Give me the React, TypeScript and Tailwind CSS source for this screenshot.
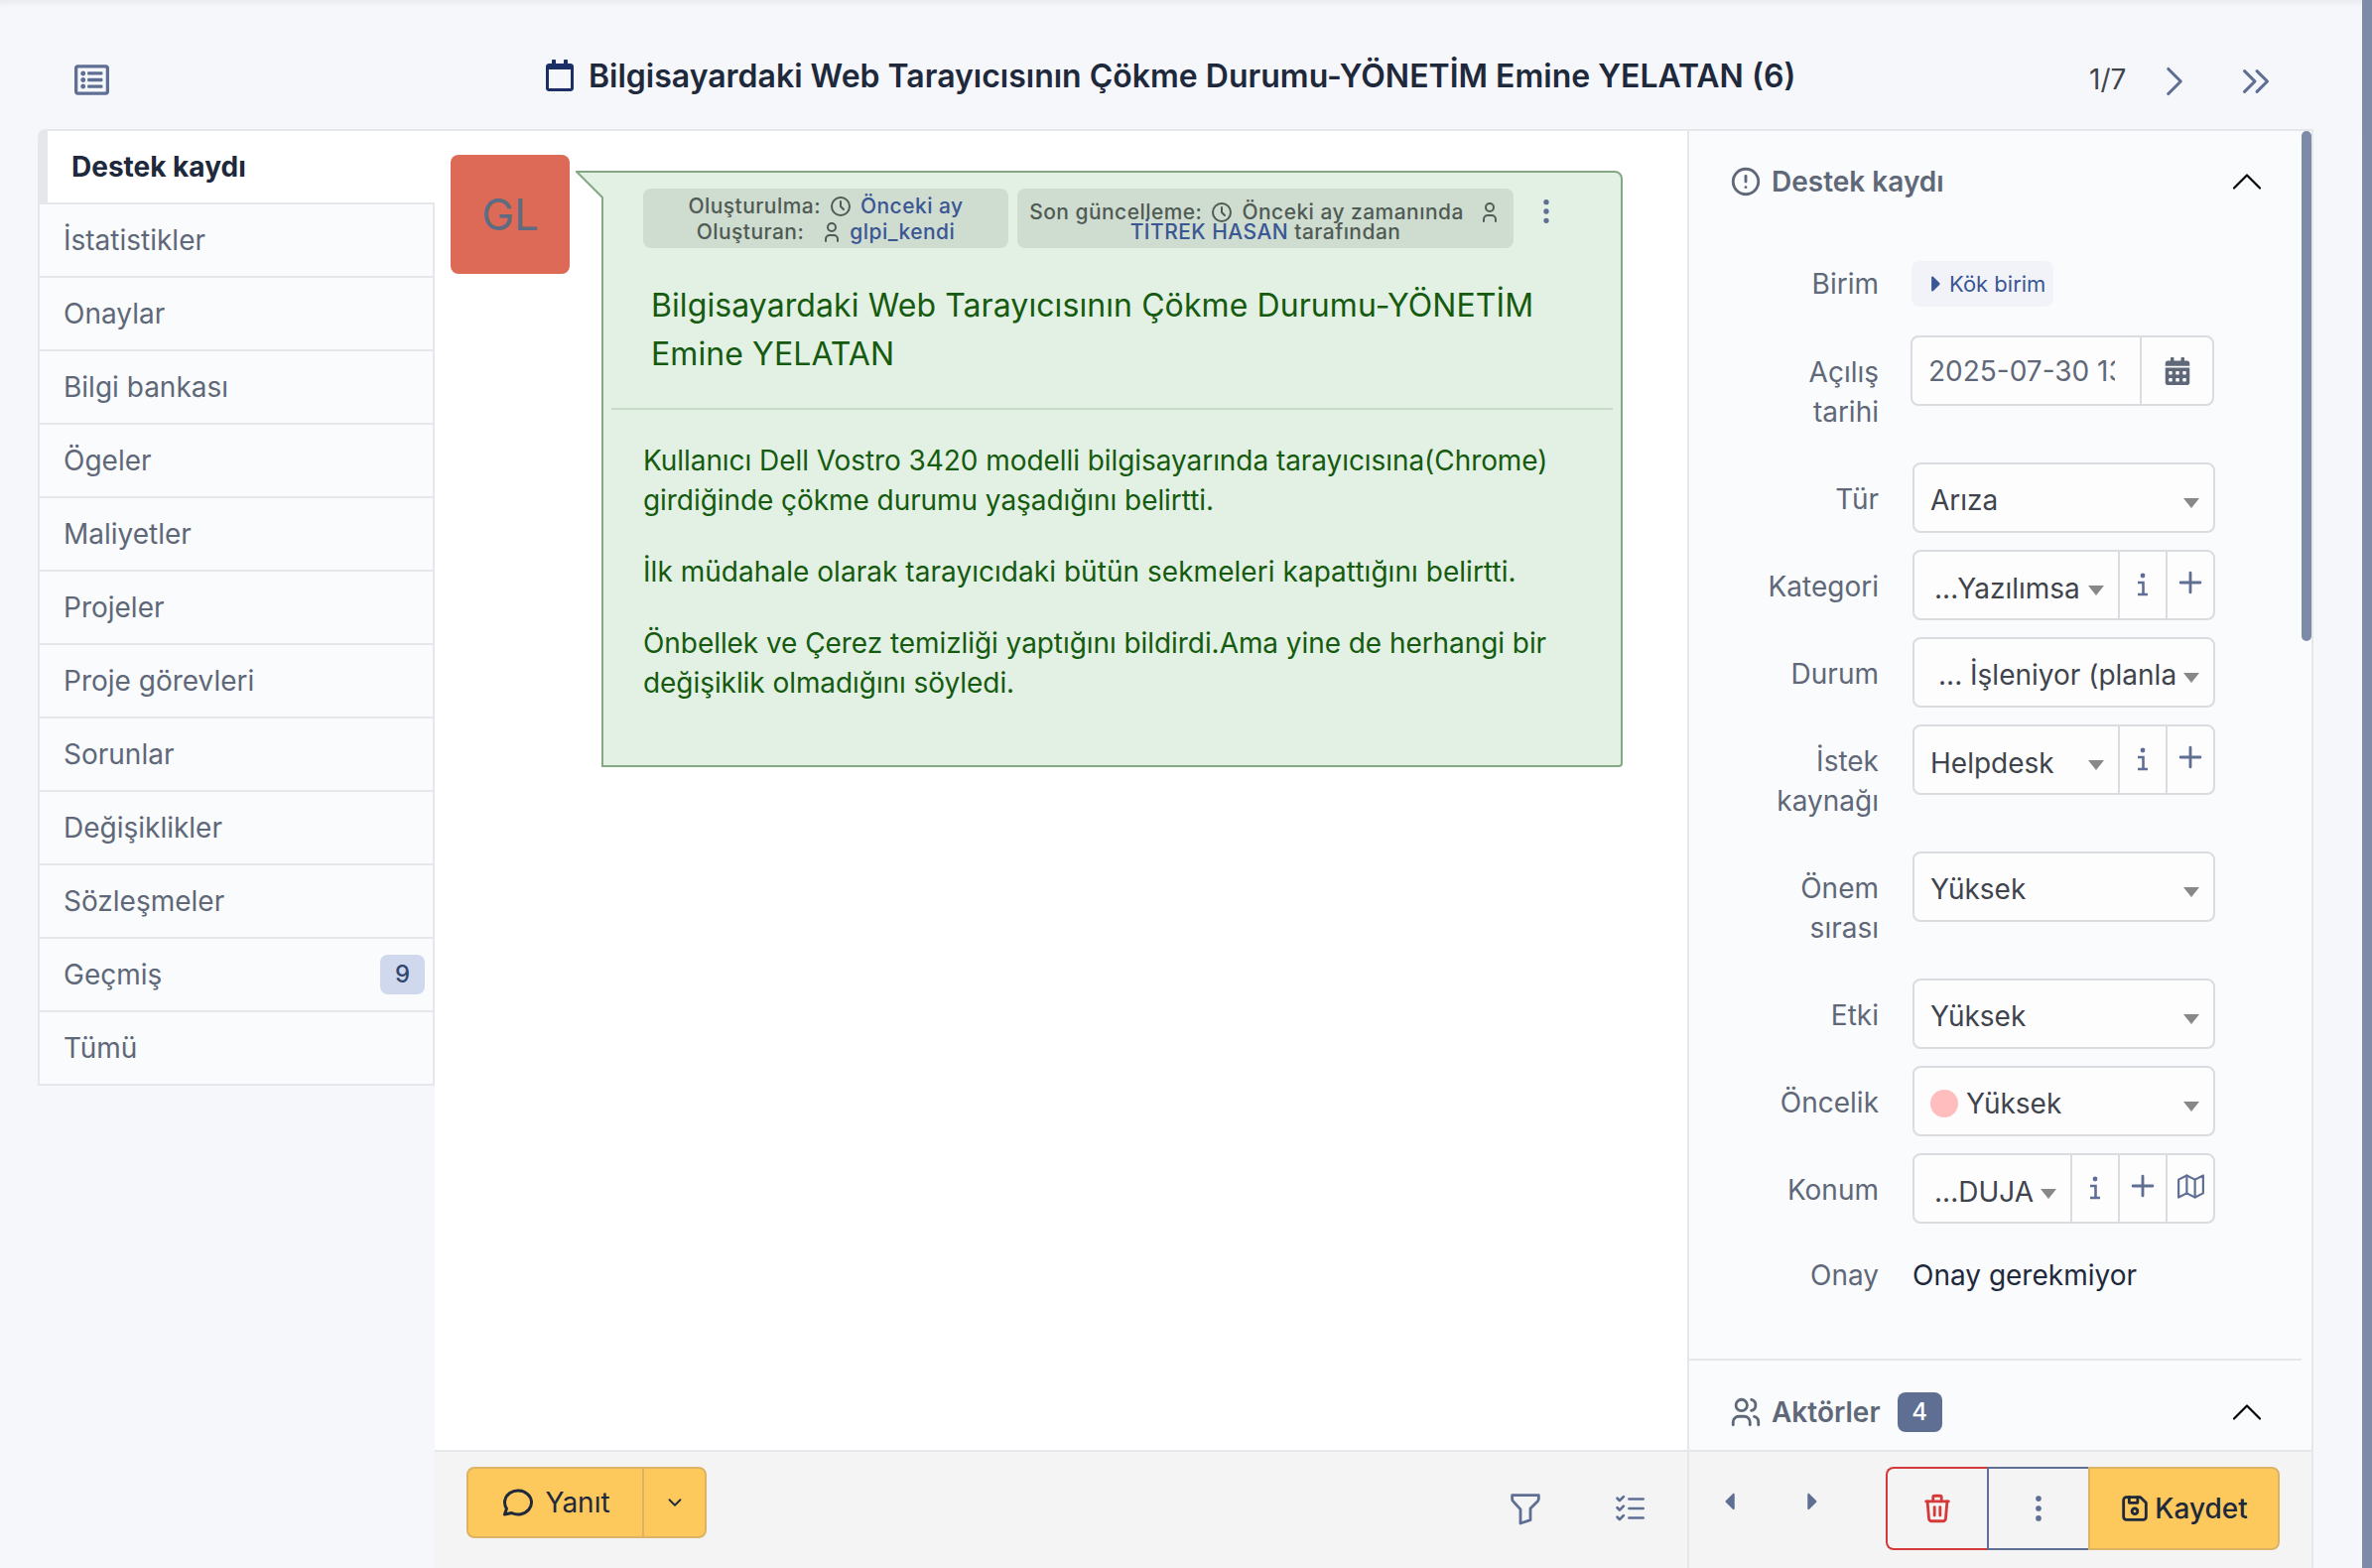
import { FaCalendarAlt, FaCaretLeft, FaCaretRight, FaRegCalendar, FaRegListAlt } from "react-icons/fa";
import {
  TbAlertCircle,
  TbChevronDown,
  TbChevronRight,
  TbChevronsRight,
  TbChevronUp,
  TbClock,
  TbDeviceFloppy,
  TbDotsVertical,
  TbFilter,
  TbListCheck,
  TbMap,
  TbMessageCircle,
  TbPlus,
  TbTrash,
  TbUser,
  TbUsers,
} from "react-icons/tb";

const tabs = [
  "İstatistikler",
  "Onaylar",
  "Bilgi bankası",
  "Ögeler",
  "Maliyetler",
  "Projeler",
  "Proje görevleri",
  "Sorunlar",
  "Değişiklikler",
  "Sözleşmeler",
  "Geçmiş",
  "Tümü",
];

const Caret = ({ low }: { low?: boolean }) => (
  <span
    className={`ml-auto h-0 w-0 flex-none border-x-[8px] border-t-[10px] border-x-transparent border-t-[#888888] ${
      low ? "mt-[10px]" : "mt-[6px]"
    }`}
  />
);

const InfoIcon = () => (
  <svg className="mt-[4px]" width="12" height="24" viewBox="0 0 12 24" fill="none" stroke="currentColor" strokeWidth="2.6">
    <circle cx="6" cy="3" r="2.4" fill="currentColor" stroke="none" />
    <path d="M1 10 H6.5 V22 M1 22 H11" />
  </svg>
);

const Addon = ({ children }: { children: React.ReactNode }) => (
  <div className="flex w-[48px] flex-none items-center justify-center border-l-2 border-[#dadce2] pb-[5px] text-[#5f6f94]">
    {children}
  </div>
);

const Field = ({
  label,
  children,
  tall,
}: {
  label: React.ReactNode;
  children: React.ReactNode;
  tall?: boolean;
}) => (
  <div className={`mb-[18px] flex ${tall ? "h-[110px]" : "h-[70px]"}`}>
    <div className="w-[191px] flex-none pt-[17px] text-right leading-[40px] text-[#5f6878]">{label}</div>
    <div className="ml-[34px] h-[71px] w-[305px] flex-none">{children}</div>
  </div>
);

const SelectBox = ({ children, pl = "pl-[16px]" }: { children: React.ReactNode; pl?: string }) => (
  <div
    className={`flex h-full items-center rounded-lg border-2 border-[#dadce2] bg-[#fdfdfe] pr-[14px] pt-[4px] text-[#3f444c] ${pl}`}
  >
    {children}
    <Caret />
  </div>
);

const Group = ({ value, pl, map }: { value: string; pl: string; map?: boolean }) => (
  <div className="flex h-full rounded-lg border-2 border-[#dadce2] bg-[#fdfdfe] text-[#3f444c]">
    <div className={`flex min-w-0 flex-1 items-center pr-[14px] ${pl}`}>
      <span className="mt-[6px] whitespace-nowrap">{value}</span>
      <Caret low />
    </div>
    <Addon>
      <InfoIcon />
    </Addon>
    <Addon>
      <TbPlus size={34} />
    </Addon>
    {map && (
      <Addon>
        <TbMap size={33} strokeWidth={1.6} />
      </Addon>
    )}
  </div>
);

export default function App() {
  return (
    <div className="flex h-[1580px] w-[2390px] overflow-hidden bg-[#f6f7fb] font-['Inter',sans-serif] text-[28px] text-[#1e293b]">
      <div className="flex w-[2380px] flex-none flex-col">
        {/* Header */}
        <header className="flex h-[130px] flex-none items-center pt-[30px] shadow-[inset_0_7px_7px_-5px_rgba(0,0,0,0.07)]">
          <div className="w-[548px] flex-none pl-[75px]">
            <FaRegListAlt size={35} className="text-[#5f6f94]" />
          </div>
          <FaRegCalendar size={32} className="mb-[9px] flex-none text-[#1b2f66]" />
          <h1 className="mb-[7px] ml-[13px] w-[1512px] flex-none whitespace-nowrap text-[32px] font-semibold text-[#1e293b]">
            Bilgisayardaki Web Tarayıcısının Çökme Durumu-YÖNETİM Emine YELATAN (6)
          </h1>
          <span className="text-[#3f444c]">1/7</span>
          <TbChevronRight size={50} strokeWidth={1.5} className="ml-[24px] mt-[4px] text-[#5f6f94]" />
          <TbChevronsRight size={50} strokeWidth={1.5} className="ml-[31px] mt-[4px] text-[#5f6f94]" />
        </header>

        <div className="ml-[38px] flex min-h-0 w-[2293px] flex-1">
          {/* Tabs */}
          <nav className="w-[400px] flex-none">
            <div className="flex h-[76px] items-center rounded-tl-lg border-b-2 border-l-[10px] border-t-2 border-[#e5e7eb] bg-white pl-[24px] font-bold">
              Destek kaydı
            </div>
            {tabs.map((tab) => (
              <div
                key={tab}
                className="flex h-[74px] items-center border-x-2 border-b-2 border-[#e5e7eb] bg-[#fafbfd] pl-[24px] pr-[8px] text-[#5f6878]"
              >
                {tab}
                {tab === "Geçmiş" && (
                  <span className="ml-auto flex h-[40px] w-[45px] items-center justify-center rounded-lg bg-[#d0d8ee] text-[24px] font-medium text-[#33466f]">
                    9
                  </span>
                )}
              </div>
            ))}
          </nav>

          {/* Timeline */}
          <main className="flex w-[1262px] flex-none flex-col border-t-2 border-[#e5e7eb] bg-white">
            <div className="flex min-h-0 flex-1 items-start pl-[16px] pt-[24px]">
              <div className="flex h-[120px] w-[120px] flex-none items-center justify-center rounded-lg bg-[#dd6a56] text-[44px] text-[#5f6b80]">
                GL
              </div>
              <div className="relative ml-[32px] mt-[16px] h-[601px] w-[1029px] flex-none rounded-tr-lg rounded-br-sm border-2 border-[#84a884] bg-[#e2f1e3] text-[#155a0f]">
                <svg className="absolute -left-[28px] -top-[2px]" width="30" height="30" viewBox="0 0 30 30">
                  <path d="M2 1 L28 1 L28 27 Z" fill="#e2f1e3" />
                  <path d="M28 1 L1 1 L27 27" fill="none" stroke="#84a884" strokeWidth="2" />
                </svg>
                <div className="flex items-start pl-[40px] pt-[16px] text-[21px] font-medium leading-[26px] tracking-[0.45px] text-[#4f5b54]">
                  <div className="flex h-[60px] w-[368px] flex-none flex-col items-center justify-center rounded-lg bg-[#cfdcd0] pt-[2px]">
                    <span className="flex items-center">
                      Oluşturulma:
                      <TbClock size={24} className="mx-[8px]" />
                      <span className="text-[#3a5693]">Önceki ay</span>
                    </span>
                    <span className="flex items-center">
                      Oluşturan:
                      <TbUser size={24} className="ml-[16px] mr-[6px]" />
                      <span className="text-[#3a5693]">glpi_kendi</span>
                    </span>
                  </div>
                  <div className="ml-[9px] flex h-[60px] w-[500px] flex-none flex-col items-center justify-center rounded-lg bg-[#cfdcd0] pt-[8px]">
                    <span className="flex items-center">
                      Son güncelleme:
                      <TbClock size={24} className="mx-[8px]" />
                      Önceki ay zamanında
                      <TbUser size={24} className="ml-[14px]" />
                    </span>
                    <span className="-mt-[6px]">
                      <span className="text-[#3a5693]">TİTREK HASAN</span> tarafından
                    </span>
                  </div>
                  <TbDotsVertical size={32} className="ml-[17px] mt-[7px] text-[#5f6f94]" />
                </div>
                <h2 className="ml-[48px] mt-[33px] w-[950px] text-[32px] leading-[49px] tracking-[0.085px]">
                  Bilgisayardaki Web Tarayıcısının Çökme Durumu-YÖNETİM Emine YELATAN
                </h2>
                <div className="mx-[8px] mt-[30px] h-[2px] bg-[#c8dbc9]" />
                <div className="px-[40px] pt-[31px] leading-[40px] tracking-[-0.065px]">
                  <p className="mb-[32px]">
                    Kullanıcı Dell Vostro 3420 modelli bilgisayarında tarayıcısına(Chrome)
                    <br />
                    girdiğinde çökme durumu yaşadığını belirtti.
                  </p>
                  <p className="mb-[32px] tracking-[0.04px]">
                    İlk müdahale olarak tarayıcıdaki bütün sekmeleri kapattığını belirtti.
                  </p>
                  <p>
                    Önbellek ve Çerez temizliği yaptığını bildirdi.Ama yine de herhangi bir
                    <br />
                    değişiklik olmadığını söyledi.
                  </p>
                </div>
              </div>
            </div>
            <div className="flex h-[119px] flex-none items-start justify-between border-t-2 border-[#e5e7eb] bg-[#f4f4f5] pl-[32px] pt-[15px]">
              <div className="flex h-[72px] w-[242px] rounded-lg border-2 border-[#dcb263] bg-[#fec95c]">
                <div className="flex w-[177px] items-center justify-center gap-[9px] border-r-2 border-[#dcb263]">
                  <TbMessageCircle size={36} />
                  Yanıt
                </div>
                <div className="flex flex-1 items-center justify-center">
                  <TbChevronDown size={22} />
                </div>
              </div>
              <div className="flex items-center gap-[67px] pr-[38px] pt-[22px] text-[#5f6f94]">
                <TbFilter size={40} strokeWidth={1.7} />
                <TbListCheck size={38} strokeWidth={1.7} />
              </div>
            </div>
          </main>

          {/* Right side */}
          <aside className="relative flex w-[631px] flex-none flex-col border-r-2 border-l-2 border-[#e5e7eb] bg-[#fafbfd]">
            <div className="min-h-0 flex-1 overflow-hidden border-t-2 border-[#e5e7eb]">
              <div className="flex h-[102px] items-center pl-[40px] pr-[39px] font-semibold text-[#5f6878]">
                <TbAlertCircle size={34} className="mr-[9px]" />
                Destek kaydı
                <TbChevronUp size={52} strokeWidth={1} className="ml-auto text-black" />
              </div>
              <div className="mb-[29px] mt-[29px] flex h-[46px]">
                <div className="w-[191px] flex-none text-right leading-[46px] text-[#5f6878]">Birim</div>
                <div className="ml-[33px] flex h-[46px] w-[143px] items-center rounded-lg bg-[#f2f3f8] pl-[12px] text-[22px] text-[#3a5693]">
                  <FaCaretRight size={26} />
                  Kök birim
                </div>
              </div>
              <Field
                tall
                label={
                  <>
                    Açılış
                    <br />
                    tarihi
                  </>
                }
              >
                <div className="-ml-[2px] flex h-[71px] w-[306px] rounded-lg border-2 border-[#dadce2] bg-[#fdfdfe] text-[#5f6878]">
                  <div className="w-[229px] flex-none overflow-hidden whitespace-nowrap pl-[16px] pr-[25px] leading-[68px]">
                    <div className="overflow-hidden">2025-07-30 13:00</div>
                  </div>
                  <div className="flex flex-1 items-center justify-center border-l-2 border-[#dadce2]">
                    <FaCalendarAlt size={28} />
                  </div>
                </div>
              </Field>
              <Field label="Tür">
                <SelectBox>Arıza</SelectBox>
              </Field>
              <Field label="Kategori">
                <Group value="...Yazılımsa" pl="pl-[20px]" />
              </Field>
              <Field label="Durum">
                <SelectBox pl="pl-[24px]">... İşleniyor (planla</SelectBox>
              </Field>
              <Field
                tall
                label={
                  <>
                    İstek
                    <br />
                    kaynağı
                  </>
                }
              >
                <Group value="Helpdesk" pl="pl-[16px]" />
              </Field>
              <Field
                tall
                label={
                  <>
                    Önem
                    <br />
                    sırası
                  </>
                }
              >
                <SelectBox>Yüksek</SelectBox>
              </Field>
              <Field label="Etki">
                <SelectBox>Yüksek</SelectBox>
              </Field>
              <Field label="Öncelik">
                <SelectBox pl="pl-[16px]">
                  <span className="mr-[8px] h-[28px] w-[28px] rounded-full bg-[#ffbdbd]" />
                  Yüksek
                </SelectBox>
              </Field>
              <Field label="Konum">
                <Group value="...DUJA" pl="pl-[20px]" map />
              </Field>
              <div className="mt-[33px] flex h-[40px]">
                <div className="w-[191px] flex-none text-right leading-[40px] text-[#5f6878]">Onay</div>
                <div className="ml-[34px] leading-[40px]">Onay gerekmiyor</div>
              </div>
              <div className="mr-[10px] mt-[64px] h-[2px] bg-[#e5e7eb]" />
              <div className="flex h-[90px] items-center pl-[40px] pr-[39px] pt-[14px] font-semibold text-[#5f6878]">
                <TbUsers size={34} className="mr-[9px]" />
                Aktörler
                <span className="ml-[17px] flex h-[40px] w-[45px] items-center justify-center rounded-lg bg-[#5f6f94] text-[24px] font-medium text-white">
                  4
                </span>
                <TbChevronUp size={52} strokeWidth={1} className="ml-auto text-black" />
              </div>
            </div>
            <div className="flex h-[119px] flex-none items-start border-t-2 border-[#e5e7eb] bg-[#f4f4f5] pl-[27px] pt-[15px] pr-[32px]">
              <FaCaretLeft size={28} className="mt-[21px] text-[#5f6f94]" />
              <FaCaretRight size={28} className="ml-[57px] mt-[21px] text-[#5f6f94]" />
              <div className="ml-[60px] flex h-[84px]">
                <div className="flex w-[102px] items-center justify-center rounded-l-lg border-2 border-r-0 border-[#d63939] text-[#d63939]">
                  <TbTrash size={34} />
                </div>
                <div className="flex w-[102px] items-center justify-center border-2 border-r-0 border-[#5f6f94] text-[#5f6f94]">
                  <TbDotsVertical size={34} />
                </div>
                <div className="flex w-[193px] items-center justify-center gap-[3px] rounded-r-lg border-2 border-[#dcb263] bg-[#fec95c] pr-[2px] font-medium">
                  <TbDeviceFloppy size={34} />
                  Kaydet
                </div>
              </div>
            </div>
            {/* panel's own scrollbar */}
            <div className="absolute right-0 top-[2px] h-[514px] w-[10px] rounded-full bg-[#7d8aa8]" />
          </aside>
        </div>
      </div>
      <div className="w-[10px] flex-none bg-[#7d8aa8]" />
    </div>
  );
}
